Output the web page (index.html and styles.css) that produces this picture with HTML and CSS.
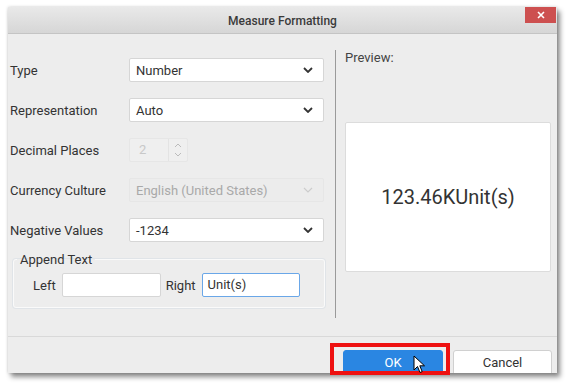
FILE: index.html
```html
<!DOCTYPE html>
<html>
<head>
<meta charset="utf-8">
<link rel="stylesheet" href="styles.css">
</head>
<body>
<div class="page">
  <div class="dialog">
    <div class="titlebar">
      <span class="title">Measure Formatting</span>
      <button class="close" aria-label="Close">
        <svg width="10" height="10" viewBox="0 0 10 10"><path d="M2 2 L8 8 M8 2 L2 8" stroke="#fff" stroke-width="1.6" fill="none"/></svg>
      </button>
    </div>
    <div class="content">
      <div class="left">
        <div class="row">
          <label class="lbl">Type</label>
          <div class="select"><span>Number</span><svg class="chev" width="10" height="6" viewBox="0 0 10 6"><path d="M1 1 L5 5 L9 1" stroke="#333" stroke-width="1.8" fill="none"/></svg></div>
        </div>
        <div class="row">
          <label class="lbl">Representation</label>
          <div class="select"><span>Auto</span><svg class="chev" width="10" height="6" viewBox="0 0 10 6"><path d="M1 1 L5 5 L9 1" stroke="#333" stroke-width="1.8" fill="none"/></svg></div>
        </div>
        <div class="row">
          <label class="lbl">Decimal Places</label>
          <div class="spinner">
            <span class="spin-val">2</span>
            <span class="spin-btns">
              <svg width="8" height="5" viewBox="0 0 8 5"><path d="M1 4 L4 1 L7 4" stroke="#bbb" stroke-width="1" fill="none"/></svg>
              <svg width="8" height="5" viewBox="0 0 8 5"><path d="M1 1 L4 4 L7 1" stroke="#bbb" stroke-width="1" fill="none"/></svg>
            </span>
          </div>
        </div>
        <div class="row">
          <label class="lbl">Currency Culture</label>
          <div class="select disabled"><span>English (United States)</span><svg class="chev" width="10" height="6" viewBox="0 0 10 6"><path d="M1 1 L5 5 L9 1" stroke="#ccc" stroke-width="1.2" fill="none"/></svg></div>
        </div>
        <div class="row">
          <label class="lbl">Negative Values</label>
          <div class="select"><span>-1234</span><svg class="chev" width="10" height="6" viewBox="0 0 10 6"><path d="M1 1 L5 5 L9 1" stroke="#333" stroke-width="1.8" fill="none"/></svg></div>
        </div>
        <fieldset class="append">
          <legend>Append Text</legend>
          <div class="append-row">
            <label class="lbl-sm">Left</label>
            <div class="input"></div>
            <label class="lbl-sm">Right</label>
            <div class="input focused">Unit(s)</div>
          </div>
        </fieldset>
      </div>
      <div class="right">
        <div class="preview-lbl">Preview:</div>
        <div class="preview-box">123.46KUnit(s)</div>
      </div>
    </div>
    <div class="footer">
      <button class="btn primary">OK</button>
      <button class="btn">Cancel</button>
    </div>
  </div>
  <div class="highlight"></div>
  <svg class="cursor" width="13" height="19" viewBox="0 0 13 19"><path d="M1 1 L1 15 L4.5 11.5 L7 17.5 L9.2 16.6 L6.8 10.8 L11.5 10.8 Z" fill="#fff" stroke="#000" stroke-width="1" stroke-linejoin="round"/></svg>
</div>
</body>
</html>
```

FILE: styles.css
```css
* { box-sizing: border-box; }
html, body { margin: 0; padding: 0; background: #fff; }
body { font-family: Roboto, "Liberation Sans", sans-serif; color: #333; }

.page {
  position: relative;
  width: 571px;
  height: 390px;
  padding: 7px 0 0 8px;
}

.dialog {
  width: 549px;
  height: 366px;
  background: #ededed;
  display: flex;
  flex-direction: column;
  overflow: hidden;
  box-shadow: 0 0 3px rgba(0,0,0,0.18), 3px 4px 5px rgba(0,0,0,0.45);
}

.titlebar {
  height: 27px;
  flex: none;
  display: flex;
  align-items: center;
  justify-content: center;
  position: relative;
  background: linear-gradient(#e9e9e9, #d6d6d6);
  border-bottom: 1px solid #c4c4c4;
}
.title { font-size: 12px; font-weight: 500; color: #3a3a3a; padding-top: 1px; }
.close {
  position: absolute;
  right: 1px;
  top: 0;
  width: 31px;
  height: 16px;
  border: 0;
  padding: 0;
  background: #cd5050;
  display: flex;
  align-items: center;
  justify-content: center;
}

.content {
  flex: 1;
  display: flex;
}

.left {
  width: 327px;
  padding: 24px 0 0 2px;
  display: flex;
  flex-direction: column;
  gap: 16px;
}

.row {
  display: flex;
  align-items: center;
  height: 24px;
}
.lbl {
  width: 119px;
  font-size: 13px;
  color: #333;
}

.select {
  width: 195px;
  height: 24px;
  background: #fff;
  border: 1px solid #d6d6d6;
  border-radius: 2px;
  display: flex;
  align-items: center;
  justify-content: space-between;
  padding: 0 10px 0 6px;
  font-size: 13px;
  color: #333;
}
.select.disabled {
  background: #ececec;
  border-color: #e6e6e6;
  color: #a9a9a9;
}

.spinner {
  width: 59px;
  height: 24px;
  border: 1px solid #e6e6e6;
  border-radius: 2px;
  background: #efefef;
  display: flex;
}
.spin-val {
  width: 39px;
  border-right: 1px solid #e3e3e3;
  font-size: 13px;
  color: #c8c8c8;
  padding-left: 9px;
  line-height: 22px;
}
.spin-btns {
  flex: 1;
  display: flex;
  flex-direction: column;
  align-items: center;
  justify-content: center;
  gap: 4px;
}

.append {
  margin: -6px 0 0 3px;
  width: 312px;
  height: 56px;
  border: 1px solid #fafafa;
  box-shadow: 0 0 0 1px #e0e4e8;
  border-radius: 3px;
  padding: 0;
}
.append legend {
  font-size: 13px;
  color: #333;
  padding: 0 3px;
  margin-left: 3px;
}
.append-row {
  display: flex;
  align-items: center;
  margin-top: 6px;
  padding-left: 19px;
}
.lbl-sm { font-size: 13px; color: #333; }
.input {
  height: 24px;
  width: 99px;
  background: #fff;
  border: 1px solid #d6d6d6;
  border-radius: 2px;
  margin: 0 5px 0 6px;
  font-size: 13px;
  line-height: 22px;
  padding-left: 5px;
}
.input.focused {
  border-color: #6aa7e8;
  margin-left: 6px;
  width: 98px;
}

.right {
  flex: 1;
  display: flex;
  flex-direction: column;
  padding: 16px 6px 0 10px;
  position: relative;
}
.right::before {
  content: "";
  position: absolute;
  left: 0;
  top: 16px;
  height: 268px;
  border-left: 1px solid #9a9a9a;
}
.preview-lbl { font-size: 13px; color: #444; }
.preview-box {
  margin-top: 57px;
  height: 150px;
  background: #fff;
  border: 1px solid #dcdcdc;
  border-radius: 2px;
  display: flex;
  align-items: center;
  justify-content: center;
  font-size: 20px;
  color: #333;
}

.footer {
  height: 37px;
  flex: none;
  border-top: 1px solid #d9d9d9;
  display: flex;
  justify-content: flex-end;
  align-items: flex-start;
  gap: 10px;
  padding: 13px 5px 0 0;
}
.btn {
  height: 28px;
  width: 99px;
  border: 1px solid #d0d0d0;
  border-radius: 3px;
  background: #fff;
  font-family: Roboto, "Liberation Sans", sans-serif;
  font-size: 13px;
  color: #333;
  padding: 0 0 4px 0;
}
.btn.primary {
  width: 100px;
  background: #2a86e2;
  border-color: #2a86e2;
  color: #fff;
}

.highlight {
  position: absolute;
  left: 330px;
  top: 343px;
  width: 120px;
  height: 32px;
  border: 4px solid #ee1111;
}
.cursor {
  position: absolute;
  left: 413px;
  top: 355px;
}
```
